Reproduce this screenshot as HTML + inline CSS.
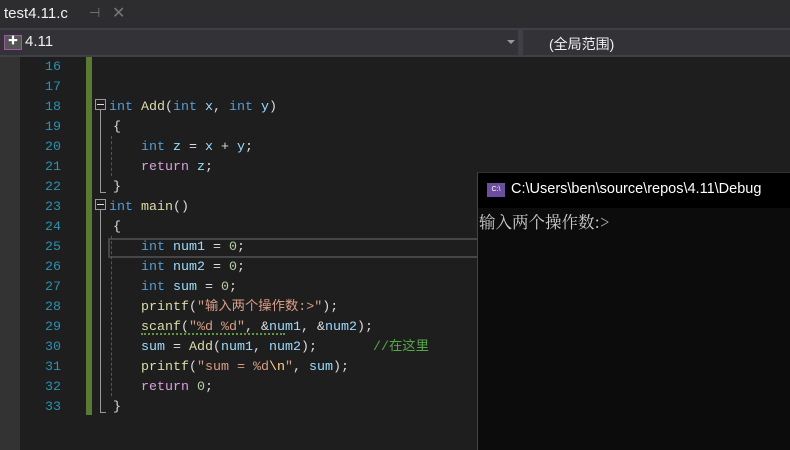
<!DOCTYPE html>
<html><head><meta charset="utf-8"><style>
*{margin:0;padding:0;box-sizing:border-box}
body{width:790px;height:450px;overflow:hidden;background:#1e1e1e;position:relative;font-family:"Liberation Sans","Noto Sans CJK SC",sans-serif}
.abs{position:absolute}
.code{font-family:"Liberation Mono","Noto Sans CJK SC",monospace;font-size:13.33px;white-space:pre;line-height:20px;color:#dcdcdc}
.ln{position:absolute;left:20px;width:41px;text-align:right;color:#2b91af;font-family:"Liberation Mono",monospace;font-size:13.33px;line-height:20px}
.k{color:#569cd6}.f{color:#dcdcaa}.v{color:#9cdcfe}.n{color:#b5cea8}.s{color:#d69d85}.c{color:#57a64a}.r{color:#d8a0df}.e{color:#ffd68f}
.b{margin-left:4px}
</style></head><body>
<div class="abs" style="left:0;top:0;width:790px;height:28px;background:#2d2d30"></div>
<div class="abs" style="left:4px;top:5px;font-size:15px;color:#f1f1f1">test4.11.c</div>
<div class="abs" style="left:89px;top:5px;font-size:13px;color:#777">⊣</div>
<div class="abs" style="left:112px;top:3px;font-size:16px;color:#777">✕</div>
<div class="abs" style="left:0;top:28px;width:790px;height:29px;background:#3f3f46"></div>
<div class="abs" style="left:0;top:30px;width:518px;height:25px;background:#333337"></div>
<div class="abs" style="left:523px;top:30px;width:267px;height:25px;background:#333337"></div>
<div class="abs" style="left:4px;top:35px;width:18px;height:15px;border:1px solid #9b5ba5;background:#555;color:#fff;font-size:10px;line-height:12px;text-align:center">✚</div>
<div class="abs" style="left:25px;top:33px;font-size:15px;color:#f1f1f1">4.11</div>
<div class="abs" style="left:507px;top:40px;width:0;height:0;border-left:4px solid transparent;border-right:4px solid transparent;border-top:4px solid #999"></div>
<div class="abs" style="left:549px;top:34px;font-size:14px;color:#f1f1f1">(全局范围)</div>
<div class="abs" style="left:0;top:57px;width:20px;height:393px;background:#333333"></div>
<div class="abs" style="left:86px;top:57px;width:6px;height:358px;background:#5a7a34"></div>
<div class="abs" style="left:108px;top:238px;width:372px;height:20px;border:2px solid #464646"></div>
<div class="abs" style="left:95px;top:99px;width:11px;height:11px;border:1px solid #999"></div>
<div class="abs" style="left:97px;top:104px;width:7px;height:1px;background:#ddd"></div>
<div class="abs" style="left:100px;top:110px;width:1px;height:83px;background:#999"></div>
<div class="abs" style="left:100px;top:192px;width:6px;height:1px;background:#999"></div>
<div class="abs" style="left:95px;top:199px;width:11px;height:11px;border:1px solid #999"></div>
<div class="abs" style="left:97px;top:204px;width:7px;height:1px;background:#ddd"></div>
<div class="abs" style="left:100px;top:210px;width:1px;height:203px;background:#999"></div>
<div class="abs" style="left:100px;top:412px;width:6px;height:1px;background:#999"></div>
<div class="abs" style="left:111px;top:136px;height:40px;border-left:1px dashed #555"></div>
<div class="abs" style="left:111px;top:236px;height:160px;border-left:1px dashed #555"></div>
<div class="abs" style="left:141px;top:332px;width:144px;height:3px;border-bottom:2px dotted #5f9a3c"></div>
<div class="ln" style="top:58px">16<br>17<br>18<br>19<br>20<br>21<br>22<br>23<br>24<br>25<br>26<br>27<br>28<br>29<br>30<br>31<br>32<br>33</div>
<div class="abs code" style="left:109px;top:58px">

<span class="k">int</span> <span class="f">Add</span>(<span class="k">int</span> <span class="v">x</span>, <span class="k">int</span> <span class="v">y</span>)
<span class="b">{</span>
    <span class="k">int</span> <span class="v">z</span> = <span class="v">x</span> + <span class="v">y</span>;
    <span class="r">return</span> <span class="v">z</span>;
<span class="b">}</span>
<span class="k">int</span> <span class="f">main</span>()
<span class="b">{</span>
    <span class="k">int</span> <span class="v">num1</span> = <span class="n">0</span>;
    <span class="k">int</span> <span class="v">num2</span> = <span class="n">0</span>;
    <span class="k">int</span> <span class="v">sum</span> = <span class="n">0</span>;
    <span class="f">printf</span>(<span class="s">"输入两个操作数:&gt;"</span>);
    <span class="f">scanf</span>(<span class="s">"%d %d"</span>, &amp;<span class="v">num1</span>, &amp;<span class="v">num2</span>);
    <span class="v">sum</span> = <span class="f">Add</span>(<span class="v">num1</span>, <span class="v">num2</span>);       <span class="c">//在这里</span>
    <span class="f">printf</span>(<span class="s">"sum = %d<span class="e">\n</span>"</span>, <span class="v">sum</span>);
    <span class="r">return</span> <span class="n">0</span>;
<span class="b">}</span></div>
<div class="abs" style="left:477px;top:172px;width:313px;height:278px;background:#0c0c0c;border-left:1px solid #444;border-top:1px solid #333"></div>
<div class="abs" style="left:478px;top:173px;width:312px;height:35px;background:#000"></div>
<div class="abs" style="left:487px;top:183px;width:18px;height:14px;background:#6b4e9e;color:#fff;font-size:7px;line-height:14px;text-align:center">C:\</div>
<div class="abs" style="left:511px;top:181px;font-size:14.5px;color:#fff;white-space:nowrap">C:\Users\ben\source\repos\4.11\Debug</div>
<div class="abs" style="left:479px;top:209px;font-size:16.5px;color:#cccccc;font-family:'Noto Serif CJK SC','Liberation Mono',serif;white-space:nowrap">输入两个操作数:&gt;</div>
</body></html>
